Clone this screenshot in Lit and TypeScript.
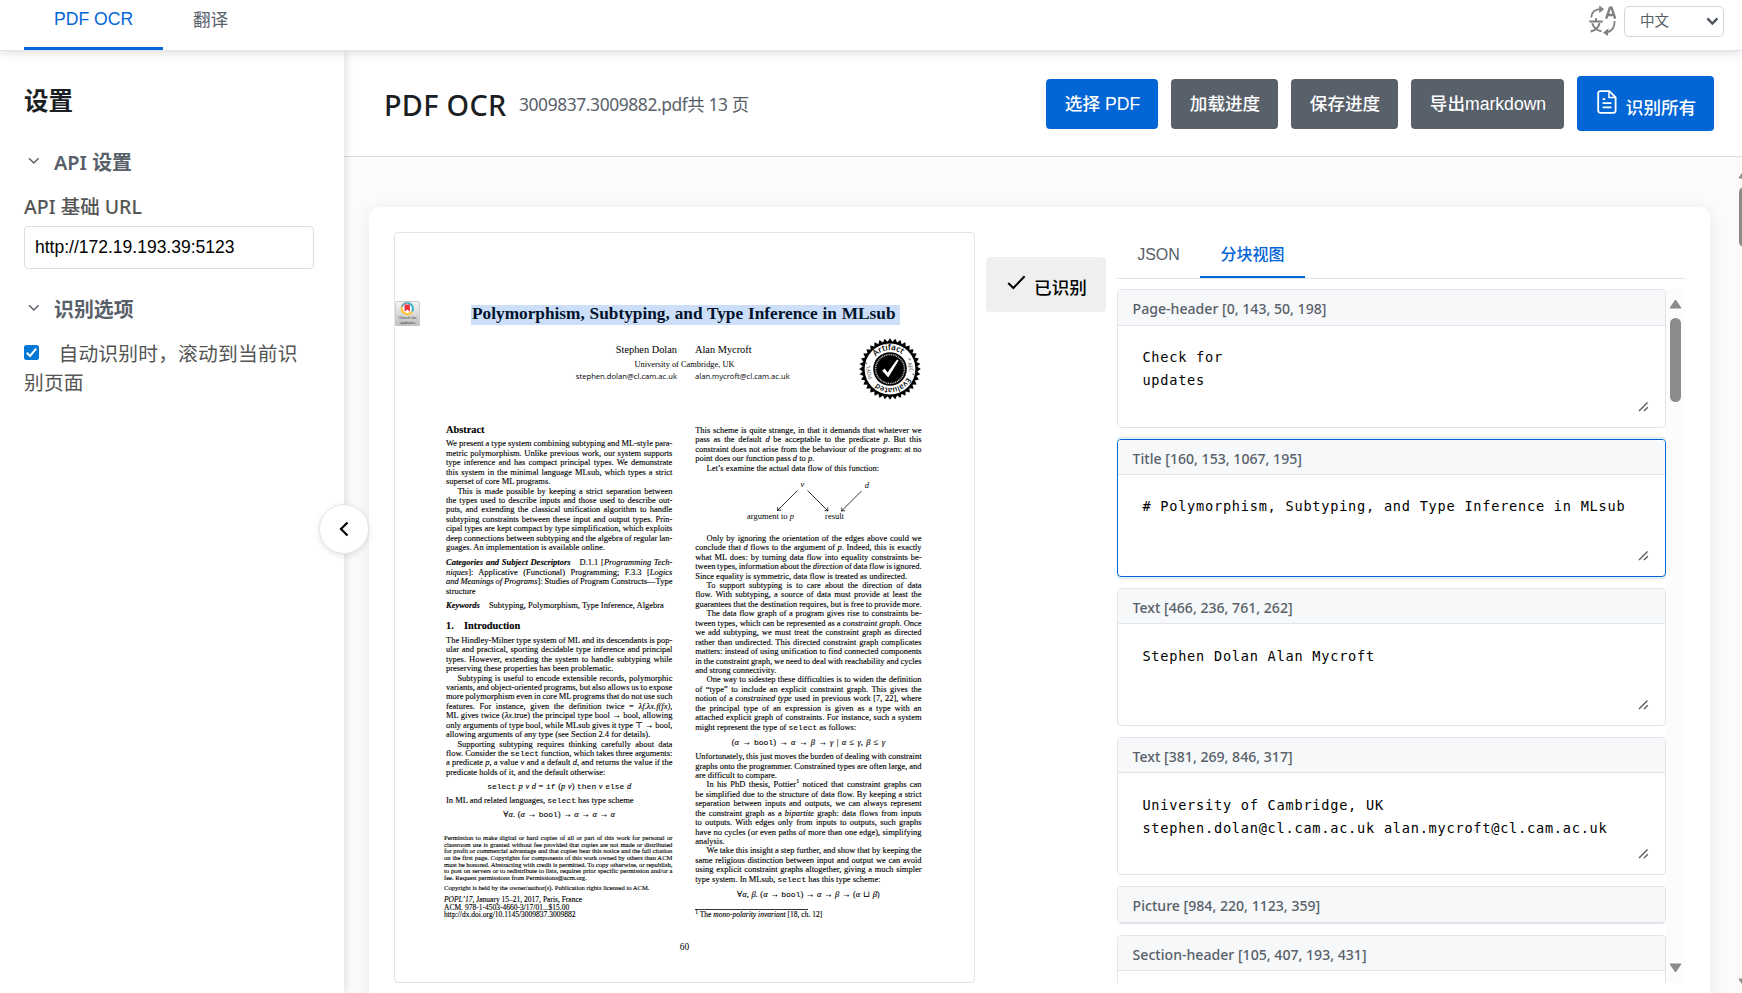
import { LitElement, html, css, svg, nothing } from "lit";
import { customElement, property } from "lit/decorators.js";
import { classMap } from "lit/directives/class-map.js";

const SANS = css`"Noto Sans", "Noto Sans CJK SC", sans-serif`;
const ARIAL = css`"Liberation Sans", "Noto Sans CJK SC", sans-serif`;

const m = (t: string) => html`<i>${t}</i>`;
const tt = (t: string) => html`<code>${t}</code>`;

interface Line {
  content: unknown;
  /** Class names: n = ragged line, p = paragraph indent, c = centred, wide = loose math spacing. */
  opt: string;
}
interface Block {
  kind: string;
  lines: Line[];
}
const ln = (content: unknown, opt = ""): Line => ({ content, opt });

const LEFT: Block[] = [
  { kind: "heading", lines: [ln("Abstract", "n")] },
  {
    kind: "body after-heading",
    lines: [
      ln("We present a type system combining subtyping and ML-style para-"),
      ln("metric polymorphism. Unlike previous work, our system supports"),
      ln("type inference and has compact principal types. We demonstrate"),
      ln("this system in the minimal language MLsub, which types a strict"),
      ln("superset of core ML programs.", "n"),
      ln("This is made possible by keeping a strict separation between", "p"),
      ln("the types used to describe inputs and those used to describe out-"),
      ln("puts, and extending the classical unification algorithm to handle"),
      ln("subtyping constraints between these input and output types. Prin-"),
      ln("cipal types are kept compact by type simplification, which exploits"),
      ln("deep connections between subtyping and the algebra of regular lan-"),
      ln("guages. An implementation is available online.", "n"),
    ],
  },
  {
    kind: "body gap-6",
    lines: [
      ln(html`<b><i class="lead">Categories and Subject Descriptors</i></b>D.1.1 [<i>Programming Tech-</i>`),
      ln(html`<i>niques</i>]: Applicative (Functional) Programming; F.3.3 [<i>Logics</i>`),
      ln(html`<i>and Meanings of Programs</i>]: Studies of Program Constructs—Type`),
      ln("structure", "n"),
    ],
  },
  {
    kind: "body gap-5",
    lines: [ln(html`<b><i class="lead">Keywords</i></b>Subtyping, Polymorphism, Type Inference, Algebra`, "n")],
  },
  { kind: "heading section", lines: [ln(html`<span class="num">1.</span>Introduction`, "n")] },
  {
    kind: "body after-heading",
    lines: [
      ln("The Hindley-Milner type system of ML and its descendants is pop-"),
      ln("ular and practical, sporting decidable type inference and principal"),
      ln("types. However, extending the system to handle subtyping while"),
      ln("preserving these properties has been problematic.", "n"),
      ln("Subtyping is useful to encode extensible records, polymorphic", "p"),
      ln("variants, and object-oriented programs, but also allows us to expose"),
      ln("more polymorphism even in core ML programs that do not use such"),
      ln(html`features. For instance, given the definition twice = ${m("λf.λx.f(fx)")},`),
      ln(html`ML gives twice (${m("λx")}.true) the principal type bool → bool, allowing`),
      ln("only arguments of type bool, while MLsub gives it type ⊤ → bool,"),
      ln("allowing arguments of any type (see Section 2.4 for details).", "n"),
      ln("Supporting subtyping requires thinking carefully about data", "p"),
      ln(html`flow. Consider the ${tt("select")} function, which takes three arguments:`),
      ln(html`a predicate ${m("p")}, a value ${m("v")} and a default ${m("d")}, and returns the value if the`),
      ln("predicate holds of it, and the default otherwise:", "n"),
    ],
  },
  {
    kind: "body formula",
    lines: [
      ln(html`${tt("select")} ${m("p v d")} = ${tt("if")} (${m("p v")}) ${tt("then")} ${m("v")} ${tt("else")} ${m("d")}`, "c wide"),
    ],
  },
  { kind: "body gap-5", lines: [ln(html`In ML and related languages, ${tt("select")} has type scheme`, "n")] },
  { kind: "body gap-5", lines: [ln(html`∀${m("α")}. (${m("α")} → ${tt("bool")}) → ${m("α")} → ${m("α")} → ${m("α")}`, "c wide")] },
  {
    kind: "fine notice",
    lines: [
      ln("Permission to make digital or hard copies of all or part of this work for personal or"),
      ln("classroom use is granted without fee provided that copies are not made or distributed"),
      ln("for profit or commercial advantage and that copies bear this notice and the full citation"),
      ln("on the first page. Copyrights for components of this work owned by others than ACM"),
      ln("must be honored. Abstracting with credit is permitted. To copy otherwise, or republish,"),
      ln("to post on servers or to redistribute to lists, requires prior specific permission and/or a"),
      ln("fee. Request permissions from Permissions@acm.org.", "n"),
    ],
  },
  {
    kind: "fine rights",
    lines: [ln("Copyright is held by the owner/author(s). Publication rights licensed to ACM.", "n")],
  },
  {
    kind: "imprint",
    lines: [
      ln(html`<i>POPL’17</i>, January 15–21, 2017, Paris, France`, "n"),
      ln("ACM. 978-1-4503-4660-3/17/01...$15.00", "n"),
      ln("http://dx.doi.org/10.1145/3009837.3009882", "n"),
    ],
  },
];

const RIGHT_TOP: Block[] = [
  {
    kind: "body",
    lines: [
      ln("This scheme is quite strange, in that it demands that whatever we"),
      ln(html`pass as the default ${m("d")} be acceptable to the predicate ${m("p")}. But this`),
      ln("constraint does not arise from the behaviour of the program: at no"),
      ln(html`point does our function pass ${m("d")} to ${m("p")}.`, "n"),
      ln("Let’s examine the actual data flow of this function:", "p n"),
    ],
  },
];

const RIGHT_REST: Block[] = [
  {
    kind: "body",
    lines: [
      ln("Only by ignoring the orientation of the edges above could we", "p"),
      ln(html`conclude that ${m("d")} flows to the argument of ${m("p")}. Indeed, this is exactly`),
      ln("what ML does: by turning data flow into equality constraints be-"),
      ln(html`tween types, information about the <i>direction</i> of data flow is ignored.`),
      ln("Since equality is symmetric, data flow is treated as undirected.", "n"),
      ln("To support subtyping is to care about the direction of data", "p"),
      ln("flow. With subtyping, a source of data must provide at least the"),
      ln("guarantees that the destination requires, but is free to provide more."),
      ln("The data flow graph of a program gives rise to constraints be-", "p"),
      ln(html`tween types, which can be represented as a <i>constraint graph</i>. Once`),
      ln("we add subtyping, we must treat the constraint graph as directed"),
      ln("rather than undirected. This directed constraint graph complicates"),
      ln("matters: instead of using unification to find connected components"),
      ln("in the constraint graph, we need to deal with reachability and cycles"),
      ln("and strong connectivity.", "n"),
      ln("One way to sidestep these difficulties is to widen the definition", "p"),
      ln("of “type” to include an explicit constraint graph. This gives the"),
      ln(html`notion of a <i>constrained type</i> used in previous work [7, 22], where`),
      ln("the principal type of an expression is given as a type with an"),
      ln("attached explicit graph of constraints. For instance, such a system"),
      ln(html`might represent the type of ${tt("select")} as follows:`, "n"),
    ],
  },
  {
    kind: "body gap-6",
    lines: [
      ln(
        html`(${m("α")} → ${tt("bool")}) → ${m("α")} → ${m("β")} → ${m("γ")} | ${m("α")} ≤ ${m("γ")}, ${m("β")} ≤ ${m("γ")}`,
        "c wider"
      ),
    ],
  },
  {
    kind: "body gap-5",
    lines: [
      ln("Unfortunately, this just moves the burden of dealing with constraint"),
      ln("graphs onto the programmer. Constrained types are often large, and"),
      ln("are difficult to compare.", "n"),
      ln(html`In his PhD thesis, Pottier<sup>1</sup> noticed that constraint graphs can`, "p"),
      ln("be simplified due to the structure of data flow. By keeping a strict"),
      ln("separation between inputs and outputs, we can always represent"),
      ln(html`the constraint graph as a <i>bipartite</i> graph: data flows from inputs`),
      ln("to outputs. With edges only from inputs to outputs, such graphs"),
      ln("have no cycles (or even paths of more than one edge), simplifying"),
      ln("analysis.", "n"),
      ln("We take this insight a step further, and show that by keeping the", "p"),
      ln("same religious distinction between input and output we can avoid"),
      ln("using explicit constraint graphs altogether, giving a much simpler"),
      ln(html`type system. In MLsub, ${tt("select")} has this type scheme:`, "n"),
    ],
  },
  {
    kind: "body gap-6",
    lines: [
      ln(
        html`∀${m("α")}, ${m("β")}. (${m("α")} → ${tt("bool")}) → ${m("α")} → ${m("β")} → (${m("α")} ⊔ ${m("β")})`,
        "c wide"
      ),
    ],
  },
  {
    kind: "footnote",
    lines: [ln(html`<sup>1</sup> The <i>mono-polarity invariant</i> [18, ch. 12]`, "n")],
  },
];

const sealTeeth = () => {
  const pts: string[] = [];
  const n = 36;
  for (let i = 0; i < n * 2; i++) {
    const r = i % 2 ? 27.4 : 30.8;
    const a = (i * Math.PI) / n;
    pts.push(`${(31 + r * Math.cos(a)).toFixed(2)},${(31 + r * Math.sin(a)).toFixed(2)}`);
  }
  return pts.join(" ");
};

@customElement("pdf-page")
class PdfPage extends LitElement {
  static styles = css`
    :host {
      display: block;
      position: relative;
      box-sizing: border-box;
      width: 581px;
      height: 751px;
      border: 1px solid #e1e4ea;
      border-radius: 4px;
      background: #fff;
      color: #000;
      font-family: "Liberation Serif", "DejaVu Serif", serif;
      overflow: hidden;
    }
    .badge {
      position: absolute;
      left: 0;
      top: 68px;
      width: 25px;
      height: 25px;
    }
    .seal {
      position: absolute;
      left: 464px;
      top: 104.5px;
      width: 62px;
      height: 62px;
    }
    .title {
      box-sizing: border-box;
      width: 429px;
      height: 20px;
      margin: 72px 0 0 76px;
      padding: 0 4.5px 0 1px;
      background: #cddff8;
      color: #00132b;
      font-weight: bold;
      font-size: 17.3px;
      line-height: 18.6px;
      white-space: nowrap;
      word-spacing: -1px;
      text-align: justify;
      text-align-last: justify;
    }
    .authors {
      display: grid;
      grid-template-columns: 282px 1fr;
      column-gap: 18px;
      margin-top: 17px;
      white-space: nowrap;
    }
    .authors .r {
      text-align: right;
    }
    .name {
      font-size: 10.35px;
      line-height: 15px;
    }
    .affil {
      grid-column: 1 / -1;
      width: 579px;
      text-align: center;
      font-size: 8.4px;
      line-height: 12px;
      margin-top: 2px;
    }
    .mail {
      font-family: "Open Sans", "Noto Sans", sans-serif;
      font-size: 7.65px;
      line-height: 10px;
    }
    .columns {
      display: grid;
      grid-template-columns: 226.4px 226.4px;
      column-gap: 22.8px;
      margin: 42.7px 0 0 51px;
      -webkit-text-stroke: 0.12px #000;
    }
    .right {
      padding-top: 2.2px;
    }
    .line {
      white-space: nowrap;
      text-align: justify;
      text-align-last: justify;
      word-spacing: -0.7px;
    }
    .line.n {
      text-align-last: left;
      word-spacing: 0;
    }
    .line.c {
      text-align-last: center;
      word-spacing: 0;
    }
    .line.wide {
      word-spacing: 0.5px;
    }
    .line.wider {
      word-spacing: 1.2px;
    }
    .line.p {
      padding-left: 11.4px;
    }
    .body {
      font-size: 8.47px;
      line-height: 9.43px;
    }
    .heading {
      font-size: 10.35px;
      line-height: 12px;
      font-weight: bold;
    }
    .section {
      margin-top: 9.7px;
    }
    .num {
      display: inline-block;
      width: 18px;
    }
    .after-heading {
      margin-top: 3.7px;
    }
    .gap-5 {
      margin-top: 4.9px;
    }
    .gap-6 {
      margin-top: 5.7px;
    }
    .formula {
      margin-top: 4.5px;
    }
    .lead {
      margin-right: 9px;
    }
    .notice {
      margin-top: 15px;
    }
    .fine {
      font-size: 6.6px;
      line-height: 6.67px;
      margin-left: -2px;
    }
    .rights {
      margin-top: 2.9px;
    }
    .imprint {
      font-size: 7.53px;
      line-height: 7.4px;
      margin: 5.1px 0 0 -2px;
    }
    code {
      font-family: "Liberation Mono", monospace;
      font-size: 0.94em;
      line-height: 0;
    }
    sup {
      font-size: 0.72em;
      line-height: 0;
    }
    .flow {
      display: block;
      width: 226px;
      height: 60.8px;
      font-size: 8.47px;
    }
    .footnote {
      font-size: 7.53px;
      line-height: 8.5px;
      margin-top: 9.5px;
    }
    .footnote::before {
      content: "";
      display: block;
      width: 113px;
      height: 1px;
      margin-bottom: 1.5px;
      background: #333;
    }
    .folio {
      position: absolute;
      left: 0;
      right: 0;
      top: 708.5px;
      text-align: center;
      font-size: 9.4px;
      line-height: 11px;
    }
  `;

  private blocks(list: Block[]) {
    return list.map(
      (b) => html`<div class=${b.kind}>
        ${b.lines.map((l) => html`<div class="line ${l.opt}">${l.content}</div>`)}
      </div>`
    );
  }

  render() {
    return html`
      <svg class="badge" viewBox="0 0 25 25">
        <defs>
          <linearGradient id="g" x1="0" y1="0" x2="0" y2="1">
            <stop offset="0" stop-color="#f6f6f6" />
            <stop offset="1" stop-color="#bdbdbd" />
          </linearGradient>
        </defs>
        <rect x=".5" y=".5" width="24" height="24.5" rx="1" fill="url(#g)" stroke="#ccc" />
        <circle cx="12.3" cy="7.5" r="5.7" fill="#fff" />
        <path d="M12.3 1.9 A5.7 5.7 0 0 1 17 10.6" fill="none" stroke="#3eb1c8" stroke-width="2" />
        <path d="M17 10.6 A5.7 5.7 0 0 1 6.8 6" fill="none" stroke="#ffc72c" stroke-width="2" />
        <path d="M6.8 6 A5.7 5.7 0 0 1 12.3 1.9" fill="none" stroke="#6fa3b5" stroke-width="2" />
        <path d="M9.5 3.6 h5.4 v7.2 l-2.7 -2.2 l-2.7 2.2z" fill="#ef3340" />
        <text x="12.4" y="18.4" font-size="4.3" text-anchor="middle" font-family="Liberation Sans" fill="#444">Check for</text>
        <text x="12.4" y="22.6" font-size="4.3" text-anchor="middle" font-family="Liberation Sans" fill="#444">updates</text>
      </svg>
      <svg class="seal" viewBox="0 0 62 62">
        <defs>
          <path id="top" d="M12 31 A19 19 0 0 1 50 31" />
          <path id="bot" d="M50 31 A19 19 0 0 1 12 31" />
        </defs>
        <polygon points=${sealTeeth()} fill="#000" />
        <circle cx="31" cy="31" r="25.4" fill="#fff" />
        <circle cx="31" cy="31" r="16.8" fill="#000" />
        <circle cx="31" cy="31" r="14.4" fill="none" stroke="#b5b5b5" stroke-width="1.5" stroke-dasharray="1.1 .7" />
        <g font-family="Open Sans" font-weight="600">
          <text font-size="8.2" fill="#000"><textPath href="#top" startOffset="47%" text-anchor="middle" textLength="29">Artifact</textPath></text>
          <text font-size="7.6" fill="#000"><textPath href="#bot" startOffset="44%" text-anchor="middle" textLength="35">Evaluated</textPath></text>
          <text font-size="5.4" font-weight="400" fill="#444" transform="translate(13.2 40.5) rotate(-102)">POPL *</text>
          <text font-size="5.4" font-weight="400" fill="#444" transform="translate(47.4 20.4) rotate(76)">* AEC *</text>
        </g>
        <path d="M23.2 32.8 L25.6 30.6 L28.6 34.6 L38 21.6 L39.6 22.6 L29.2 39.6 Z" fill="#fff" />
      </svg>
      <div class="title">Polymorphism, Subtyping, and Type Inference in MLsub</div>
      <div class="authors">
        <span class="name r">Stephen Dolan</span><span class="name">Alan Mycroft</span>
        <span class="affil">University of Cambridge, UK</span>
        <span class="mail r">stephen.dolan@cl.cam.ac.uk</span><span class="mail">alan.mycroft@cl.cam.ac.uk</span>
      </div>
      <div class="columns">
        <div>${this.blocks(LEFT)}</div>
        <div class="right">
          ${this.blocks(RIGHT_TOP)}
          <svg class="flow" viewBox="0 0 226 60.8" fill="none" stroke="#000" stroke-width=".8">
            <path d="M102.5 17.5 L82.5 37.5 M82.6 34 q.3 2.4 -.1 3.5 q1.2 -.5 3.5 -.2" />
            <path d="M112.5 17.5 L133 38 M129.5 37.6 q2.2 -.2 3.5 .4 q-.5 -1.5 -.2 -3.6" />
            <path d="M166.5 18 L146.5 38 M146.7 34.5 q.2 2.2 -.2 3.5 q1.4 -.5 3.6 -.2" />
            <g fill="#000" stroke="none" text-anchor="middle">
              <text x="107.5" y="14.5" font-style="italic">v</text>
              <text x="172" y="15.5" font-style="italic">d</text>
              <text x="75.5" y="46.5">argument to <tspan font-style="italic">p</tspan></text>
              <text x="139.5" y="46.5">result</text>
            </g>
          </svg>
          ${this.blocks(RIGHT_REST)}
        </div>
      </div>
      <div class="folio">60</div>
    `;
  }
}

@customElement("ocr-block")
class OcrBlock extends LitElement {
  @property() label = "";
  @property() text: string | null = null;
  @property({ type: Boolean }) active = false;

  static styles = css`
    :host {
      display: block;
      flex: none;
    }
    .card {
      border: 1px solid #e1e4ea;
      border-radius: 4px;
      background: #fff;
      overflow: hidden;
    }
    .card.active {
      border-color: #0366d6;
      box-shadow: 0 0 0 2.5px rgba(3, 102, 214, 0.1);
    }
    .head {
      height: 34.3px;
      border-bottom: 1px solid #e1e4ea;
      padding-left: 14.6px;
      background: #f6f8fa;
      color: #586069;
      font: 500 14.1px/37.4px ${SANS};
      white-space: nowrap;
    }
    .edit {
      position: relative;
      box-sizing: border-box;
      height: 101px;
      padding: 20.4px 24.4px;
      color: #000;
      font: 13.6px/23px "DejaVu Sans Mono", "Liberation Mono", monospace;
      letter-spacing: 0.76px;
      white-space: pre;
    }
    .grip {
      position: absolute;
      right: 16px;
      bottom: 15px;
      width: 11px;
      height: 11px;
    }
  `;

  render() {
    return html`<div class=${classMap({ card: true, active: this.active })}>
      <div class="head">${this.label}</div>
      ${this.text === null
        ? nothing
        : html`<div class="edit">${this.text}<svg class="grip" viewBox="0 0 11 11" stroke="#555" stroke-width="1.3">
              <path d="M1 10 L9.5 1.5 M6 10 L9.8 6.2" />
            </svg></div>`}
    </div>`;
  }
}

const BLOCKS = [
  { label: "Page-header [0, 143, 50, 198]", text: "Check for\nupdates" },
  { label: "Title [160, 153, 1067, 195]", text: "# Polymorphism, Subtyping, and Type Inference in MLsub", active: true },
  { label: "Text [466, 236, 761, 262]", text: "Stephen Dolan Alan Mycroft" },
  { label: "Text [381, 269, 846, 317]", text: "University of Cambridge, UK\nstephen.dolan@cl.cam.ac.uk alan.mycroft@cl.cam.ac.uk" },
  { label: "Picture [984, 220, 1123, 359]", text: null },
  { label: "Section-header [105, 407, 193, 431]", text: "" },
];

const chevron = svg`<path d="M1 1.2 L5.8 6 L10.6 1.2" fill="none" stroke="currentColor" stroke-width="1.5"/>`;

@customElement("app-root")
class AppRoot extends LitElement {
  static styles = css`
    :host {
      display: grid;
      grid-template-rows: 51px 1fr;
      width: 1742px;
      height: 993px;
      overflow: hidden;
      background: #fff;
      color: #1b1f23;
      font-family: ${SANS};
      font-size: 18px;
    }
    * {
      box-sizing: border-box;
    }
    .topbar {
      position: relative;
      z-index: 3;
      display: flex;
      padding: 0 18px 0 24px;
      border-bottom: 1px solid #e1e4e8;
      box-shadow: 0 2px 9px rgba(0, 0, 0, 0.13);
      background: #fff;
    }
    .tab {
      height: 50px;
      padding: 9px 30px 0;
      color: #586069;
      font: 17.6px/23px ${ARIAL};
      white-space: nowrap;
    }
    .tab.on {
      padding-top: 8px;
      color: #0366d6;
      border-bottom: 3px solid #0366d6;
      width: 139px;
    }
    .lang {
      display: flex;
      gap: 7px;
      margin-left: auto;
      padding-top: 5px;
    }
    .lang-icon {
      width: 28px;
      height: 31px;
      color: #808080;
    }
    .select {
      display: flex;
      justify-content: space-between;
      align-items: center;
      width: 100px;
      height: 31px;
      margin-top: 1px;
      padding: 0 4px 0 15px;
      border: 1px solid #d1d5da;
      border-radius: 5px;
      color: #586069;
      font: 14.6px/29px ${ARIAL};
    }
    .layout {
      display: grid;
      grid-template-columns: 344px 1fr;
      min-height: 0;
    }
    .side {
      position: relative;
      z-index: 2;
      padding: 31px 30px 0 24px;
      background: #fff;
      box-shadow: 2px 0 9px rgba(0, 0, 0, 0.12);
    }
    h2 {
      margin: 0;
      font-size: 24.5px;
      line-height: 38px;
      font-weight: 700;
    }
    .group {
      display: flex;
      align-items: center;
      gap: 14px;
      height: 30px;
      padding-left: 4px;
      color: #586069;
      font-size: 19.9px;
      font-weight: 600;
    }
    .group svg {
      width: 12px;
      height: 8px;
    }
    .group.api {
      margin-top: 26px;
    }
    .group.opts {
      margin-top: 24px;
    }
    .label {
      margin-top: 16px;
      color: #555;
      font-size: 19.5px;
      line-height: 30px;
      font-weight: 500;
    }
    .url {
      display: block;
      width: 290px;
      height: 43px;
      margin-top: 4px;
      padding: 0 10px;
      border: 1px solid #ddd;
      border-radius: 4px;
      outline: 0;
      background: #fff;
      color: #000;
      font: 17.5px ${ARIAL};
    }
    .check {
      margin-top: 16px;
      color: #555;
      font-size: 19.8px;
      line-height: 29px;
      letter-spacing: 0.15px;
    }
    .box {
      display: inline-block;
      width: 15px;
      height: 15px;
      margin-right: 19.5px;
      vertical-align: 1px;
    }
    .collapse {
      position: absolute;
      z-index: 4;
      right: -25px;
      top: 453px;
      display: grid;
      place-items: center;
      width: 50px;
      height: 50px;
      padding: 0;
      border: 1px solid #e1e4e8;
      border-radius: 50%;
      background: #fff;
      box-shadow: 0 2px 6px rgba(0, 0, 0, 0.1);
    }
    .main {
      display: grid;
      grid-template-rows: 106px 1fr;
      min-width: 0;
      min-height: 0;
      background: #fcfcfc;
    }
    .bar {
      display: flex;
      align-items: center;
      padding: 0 28px 0 40px;
      border-bottom: 1px solid #dcdee1;
      background: #fff;
    }
    h1 {
      margin: 2px 0 0;
      font-size: 28.8px;
      line-height: 40px;
      font-weight: 500;
      width: 135px;
      letter-spacing: 0.3px;
      white-space: nowrap;
    }
    .file {
      color: #586069;
      font-size: 17.4px;
      line-height: 30px;
      letter-spacing: -0.4px;
      white-space: nowrap;
    }
    .actions {
      display: flex;
      align-items: flex-end;
      gap: 13px;
      margin-left: auto;
      margin-top: -1px;
    }
    button {
      font: inherit;
      white-space: nowrap;
    }
    .btn {
      display: flex;
      align-items: center;
      justify-content: center;
      height: 50px;
      margin-bottom: 2px;
      padding: 1px 0 0 1px;
      border: 0;
      border-radius: 4px;
      background: #586069;
      color: #fff;
      font: 500 17.6px/24px ${ARIAL};
    }
    .w1 {
      width: 112px;
    }
    .w2 {
      width: 107px;
    }
    .w3 {
      width: 153px;
    }
    .primary {
      background: #0366d6;
    }
    .all {
      width: 137px;
      height: 55px;
      gap: 9px;
      margin: 0;
      padding: 1px 0 0 2px;
    }
    .all svg {
      width: 20px;
      height: 24px;
      margin-bottom: 4px;
    }
    .all span {
      padding-top: 8px;
    }
    .done span {
      padding-top: 7px;
    }
    .scroll {
      display: grid;
      grid-template-columns: 1fr 7px;
      min-height: 0;
      overflow: hidden;
    }
    .content {
      padding: 50px 25px 0;
      min-height: 0;
    }
    .panel {
      display: grid;
      grid-template-columns: 581px 120px 568px;
      column-gap: 11px;
      height: 860px;
      padding: 25px;
      border-radius: 11px;
      background: #fff;
      box-shadow: 0 2px 22px rgba(0, 0, 0, 0.08);
    }
    .track {
      overflow: hidden;
      background: #fafafa;
      padding: 12px 0 0 3px;
    }
    .track svg {
      display: block;
      width: 13px;
      height: 10px;
    }
    .track .thumb {
      width: 11px;
      height: 60px;
      margin: 8px 0 731px 1px;
      border-radius: 6px;
      background: #8b8b8b;
    }
    .done {
      display: flex;
      align-items: center;
      justify-content: center;
      gap: 8px;
      width: 120px;
      height: 55px;
      margin-top: 25px;
      padding: 0 0 0 2px;
      border: 0;
      border-radius: 4px;
      background: #efefef;
      color: #000;
      font: 500 17.6px/24px ${ARIAL};
    }
    .done svg {
      width: 19px;
      height: 15px;
      margin-bottom: 5px;
    }
    .subtabs {
      display: flex;
      height: 47px;
      border-bottom: 1px solid #e1e4e8;
    }
    .sub {
      height: 46px;
      width: 83px;
      padding-top: 10px;
      text-align: center;
      color: #586069;
      font: 16px/25px ${ARIAL};
    }
    .sub.on {
      width: 105px;
      color: #0366d6;
      border-bottom: 2px solid #0366d6;
      font-weight: 500;
    }
    .list {
      display: grid;
      grid-template-columns: 549px 19px;
      height: 694px;
      margin-top: 10px;
      overflow: hidden;
    }
    .cards {
      display: flex;
      flex-direction: column;
      gap: 11px;
      min-height: 0;
      padding-top: 0.3px;
    }
    .rail {
      display: flex;
      flex-direction: column;
      align-items: center;
      padding: 10px 0;
      background: #fcfcfc;
    }
    .rail svg {
      flex: none;
      width: 13px;
      height: 10px;
    }
    .rail .thumb {
      flex: none;
      width: 11px;
      height: 84px;
      margin: 9px 0 auto;
      border-radius: 6px;
      background: #8b8b8b;
    }
  `;

  render() {
    const up = html`<svg viewBox="0 0 13 10"><path d="M6.5 1 L12 9 H1z" fill="#8b8b8b" stroke="#8b8b8b" stroke-linejoin="round" /></svg>`;
    const down = html`<svg viewBox="0 0 13 10"><path d="M6.5 9 L12 1 H1z" fill="#8b8b8b" stroke="#8b8b8b" stroke-linejoin="round" /></svg>`;
    return html`
      <header class="topbar">
        <div class="tab on">PDF OCR</div>
        <div class="tab">翻译</div>
        <div class="lang">
          <svg class="lang-icon" viewBox="0 0 28 31" fill="none" stroke="currentColor" stroke-width="1.8">
            <path d="M2.2 12.5 C2.5 7.5 6 4.3 11.5 4.2" />
            <path d="M10.2 .4 L15.2 4.2 L10.2 7.9z" fill="currentColor" stroke="none" />
            <path d="M25.6 16 C25.8 21.6 22.8 26 18 27.4" />
            <path d="M19.4 23.2 L14 27.8 L19 31z" fill="currentColor" stroke="none" />
            <path d="M17.2 13.6 L20.9 2.6 H22.6 L26.2 13.6 M18.3 10 H25" stroke-width="2.4" />
            <path d="M.2 16.4 H13.8 M7 13.2 V16.4 M3.2 18.2 C4.5 22.5 7.5 25.2 12.6 26.4 M10.6 18 C9.5 22.5 6.5 25.4 1.6 26.4" stroke-width="2" />
          </svg>
          <div class="select">
            中文
            <svg width="13" height="9" viewBox="0 0 13 9"><path d="M1.4 1.4 L6.4 6.6 L11.4 1.4" fill="none" stroke="#4c535b" stroke-width="2.3" /></svg>
          </div>
        </div>
      </header>
      <div class="layout">
        <aside class="side">
          <h2>设置</h2>
          <div class="group api"><svg viewBox="0 0 12 8">${chevron}</svg>API 设置</div>
          <div class="label">API 基础 URL</div>
          <input class="url" value="http://172.19.193.39:5123" />
          <div class="group opts"><svg viewBox="0 0 12 8">${chevron}</svg>识别选项</div>
          <div class="check"><svg class="box" viewBox="0 0 15 15">
              <rect width="15" height="15" rx="2.5" fill="#0078d7" />
              <path d="M2.8 7.8 L6 11 L12.2 3.6" fill="none" stroke="#fff" stroke-width="2" /></svg
            >自动识别时，滚动到当前识别页面</div>
          <button class="collapse" aria-label="collapse">
            <svg width="12" height="16" viewBox="0 0 12 16"><path d="M9.5 1.5 L3 8 L9.5 14.5" fill="none" stroke="#000" stroke-width="2.2" /></svg>
          </button>
        </aside>
        <main class="main">
          <div class="bar">
            <h1>PDF OCR</h1>
            <span class="file">3009837.3009882.pdf共 13 页</span>
            <div class="actions">
              <button class="btn primary w1">选择 PDF</button>
              <button class="btn w2">加载进度</button>
              <button class="btn w2">保存进度</button>
              <button class="btn w3">导出markdown</button>
              <button class="btn primary all">
                <svg viewBox="0 0 20 24" fill="none" stroke="#fff" stroke-width="1.8">
                  <path d="M3.2 1.2 H12.4 L18.6 7.4 V20.6 Q18.6 22.8 16.4 22.8 H3.4 Q1.2 22.8 1.2 20.6 V3.4 Q1.2 1.2 3.4 1.2z" />
                  <path d="M12 1.4 V7.6 H18.4" stroke-width="1.5" />
                  <path d="M5.6 9.2 H8.2 M5.6 13.2 H14.4 M5.6 17.4 H14.4" />
                </svg>
                <span>识别所有</span>
              </button>
            </div>
          </div>
          <div class="scroll">
            <div class="content">
              <section class="panel">
                <pdf-page></pdf-page>
                <button class="done">
                  <svg viewBox="0 0 19 15"><path d="M1.2 8 L6.4 13 L17.6 1.2" fill="none" stroke="#000" stroke-width="2" /></svg>
                  <span>已识别</span>
                </button>
                <div>
                  <div class="subtabs">
                    <div class="sub">JSON</div>
                    <div class="sub on">分块视图</div>
                  </div>
                  <div class="list">
                    <div class="cards">
                      ${BLOCKS.map((b) => html`<ocr-block .label=${b.label} .text=${b.text} ?active=${!!b.active}></ocr-block>`)}
                    </div>
                    <div class="rail">${up}<div class="thumb"></div>${down}</div>
                  </div>
                </div>
              </section>
            </div>
            <div class="track">${up}<div class="thumb"></div>${down}</div>
          </div>
        </main>
      </div>
    `;
  }
}
